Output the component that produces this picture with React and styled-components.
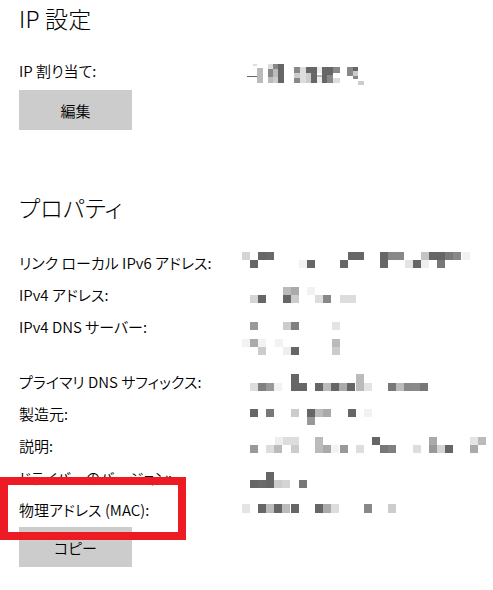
import styled, { createGlobalStyle } from "styled-components";

const GlobalStyle = createGlobalStyle`
  body {
    margin: 0;
    background: #fff;
    color: #000;
    font-family: "Noto Sans CJK JP", "Noto Sans", sans-serif;
    font-feature-settings: "palt";
  }
`;

// redacted values: [x, y, colour, w, h] in page coordinates
const B = (x, y, c, w = 8, h = 8) => [x, y, c, w, h];

const ipAssign = [
  B(247, 76, "#666", 10, 1), B(253, 64, "#ddd", 4, 2), B(257, 68, "#bbb", 6, 15),
  B(268, 64, "#ddd", 5, 5), B(268, 69, "#888", 5, 8), B(268, 77, "#bbb", 5, 6),
  B(273, 64, "#888", 5, 5), B(278, 64, "#666", 6, 5), B(273, 69, "#bbb", 5, 8),
  B(278, 69, "#666", 6, 8), B(273, 77, "#ccc", 5, 6), B(278, 77, "#666", 6, 6),
  B(294, 67, "#888", 6, 6), B(294, 73, "#ccc", 6, 5), B(294, 78, "#888", 6, 5),
  B(300, 67, "#ddd", 6, 16), B(306, 67, "#666", 5, 6), B(306, 73, "#ccc", 5, 10),
  B(311, 67, "#666", 6, 16), B(317, 67, "#eee", 5, 6), B(317, 75, "#bbb", 5, 2),
  B(317, 77, "#eee", 5, 6), B(322, 67, "#666", 5, 16), B(327, 67, "#666", 6, 8),
  B(327, 75, "#888", 6, 8), B(333, 67, "#888", 7, 6), B(333, 78, "#ddd", 7, 5),
  B(347, 67, "#888", 6, 9), B(353, 67, "#666", 5, 4), B(353, 71, "#ccc", 5, 5),
  B(353, 76, "#888", 5, 3), B(358, 81, "#ccc", 6, 4),
];

const row = (y, list, h = 8) => list.map(([x, c]) => B(x, y, c, 8, h));

const linkLocal = [
  ...row(251, [[242, "#d4d4d4"], [258, "#666"], [266, "#6a6a6a"], [348, "#666"], [356, "#666"], [380, "#666"], [388, "#888"], [396, "#888"], [421, "#c4c4c4"], [429, "#666"], [437, "#666"], [445, "#7a7a7a"], [453, "#888"], [462, "#f2f2f2"]]),
  ...row(259, [[250, "#666"], [299, "#f2f2f2"], [307, "#666"], [340, "#666"], [380, "#666"], [405, "#e4e4e4"], [413, "#666"], [421, "#eee"], [437, "#777"]]),
];

const ipv4 = [
  ...row(286, [[283, "#bbb"], [291, "#aaa"], [307, "#f2f2f2"]]),
  ...row(294, [[250, "#d4d4d4"], [258, "#666"], [283, "#666"], [291, "#ccc"], [315, "#ddd"], [323, "#888"], [340, "#ddd"], [348, "#ddd"]]),
];

const dns = [
  ...row(321, [[250, "#999"], [283, "#ccc"], [291, "#808080"], [332, "#e4e4e4"]]),
  ...row(338, [[242, "#f2f2f2"], [250, "#aaa"], [258, "#f2f2f2"], [275, "#f2f2f2"], [332, "#bbb"]]),
  ...row(346, [[258, "#ccc"], [283, "#eee"], [291, "#666"], [332, "#ccc"]]),
];

const suffix = [
  ...row(373, [[291, "#666"], [356, "#bbb"]], 9),
  ...row(382, [[250, "#ddd"], [258, "#808080"], [266, "#999"], [274, "#f2f2f2"], [291, "#666"], [299, "#666"], [315, "#666"], [323, "#bbb"], [331, "#666"], [339, "#aaa"], [347, "#666"], [356, "#bbb"], [364, "#e4e4e4"], [388, "#777"], [396, "#bbb"], [404, "#888"], [412, "#8a8a8a"], [420, "#777"]]),
];

const maker = [
  ...row(408, [[250, "#666"], [266, "#777"], [291, "#ccc"], [307, "#666"], [315, "#bbb"], [323, "#aaa"], [348, "#666"], [364, "#f2f2f2"]]),
  ...row(416, [[307, "#999"]]),
];

const desc = [
  ...row(434, [[275, "#eee"], [283, "#ddd"], [291, "#ddd"], [315, "#bbb"], [372, "#666"], [429, "#aaa"], [470, "#e4e4e4"], [478, "#bbb"]]),
  ...row(442, [[250, "#999"], [266, "#ddd"], [274, "#bbb"], [291, "#ccc"], [315, "#bbb"], [323, "#aaa"], [331, "#f2f2f2"], [340, "#999"], [356, "#ddd"], [380, "#777"], [388, "#808080"], [413, "#ddd"], [429, "#999"], [437, "#d4d4d4"], [445, "#666"], [470, "#aaa"]]),
];

const driver = [
  ...row(469, [[266, "#666"]]),
  ...row(477, [[250, "#666"], [258, "#6a6a6a"], [266, "#666"], [274, "#ccc"], [282, "#d4d4d4"], [299, "#777"]]),
];

const mac = [
  ...row(504, [[242, "#e4e4e4"], [258, "#666"], [266, "#bbb"], [274, "#666"], [282, "#bbb"], [291, "#666"], [315, "#666"], [323, "#aaa"], [331, "#ddd"], [364, "#888"], [388, "#ccc"]], 9),
];

const Mosaic = ({ blocks, top, height = 20 }) => (
  <MosaicSvg width="250" height={height}>
    {blocks.map(([x, y, c, w, h], i) => (
      <rect key={i} x={x - 242} y={y - top} width={w} height={h} fill={c} />
    ))}
  </MosaicSvg>
);

const props = [
  { label: "リンク ローカル IPv6 アドレス:", blocks: linkLocal, top: 252 },
  { label: "IPv4 アドレス:", blocks: ipv4, top: 284 },
  { label: "IPv4 DNS サーバー:", blocks: dns, top: 316, tall: true },
  { label: "プライマリ DNS サフィックス:", blocks: suffix, top: 371 },
  { label: "製造元:", blocks: maker, top: 403 },
  { label: "説明:", blocks: desc, top: 433 },
  { label: "ドライバーのバージョン:", blocks: driver, top: 465 },
];

const App = () => {
  return (
    <Page>
      <GlobalStyle />
      <Title>IP 設定</Title>
      <Row $gap={0}>
        <Label>IP 割り当て:</Label>
        <Mosaic blocks={ipAssign} top={61} />
      </Row>
      <Button>編集</Button>

      <Section>
        <Title>プロパティ</Title>
        <List>
          {props.map((p) => (
            <Row key={p.label} $tall={p.tall}>
              <Label>{p.label}</Label>
              <Mosaic blocks={p.blocks} top={p.top} height={p.tall ? 40 : 20} />
            </Row>
          ))}
          <Highlighted>
            <Row>
              <Label>物理アドレス (MAC):</Label>
              <Mosaic blocks={mac} top={500} />
            </Row>
            <Button $top={7}>コピー</Button>
            <RedBox />
          </Highlighted>
        </List>
      </Section>
    </Page>
  );
};

const Page = styled.div`
  width: 493px;
  height: 590px;
  padding-left: 19px;
  box-sizing: border-box;
  overflow: hidden;
`;

const Title = styled.div`
  font-size: 23px;
  line-height: 36px;
  font-weight: 300;
  letter-spacing: 0.2px;
`;

const Section = styled.div`
  margin-top: 59px;
`;

const List = styled.div`
  display: flex;
  flex-direction: column;
  gap: 12px;
  margin-top: 28px;
`;

const Row = styled.div`
  display: grid;
  grid-template-columns: 223px 1fr;
  align-items: start;
  height: ${(p) => (p.$tall ? "43px" : "20px")};
  margin-top: ${(p) => (p.$gap === 0 ? "25px" : "0")};
`;

const Label = styled.div`
  font-size: 15px;
  line-height: 20px;
  font-weight: 350;
  white-space: nowrap;
`;

const MosaicSvg = styled.svg`
  display: block;
  overflow: visible;
`;

const Button = styled.div`
  width: 113px;
  height: 40px;
  margin-top: ${(p) => (p.$top ?? 9) + "px"};
  background: #cccccc;
  display: flex;
  align-items: center;
  justify-content: center;
  font-size: 15px;
  font-weight: 350;
`;

const Highlighted = styled.div`
  position: relative;
`;

const RedBox = styled.div`
  position: absolute;
  left: -19px;
  top: -23px;
  width: 186px;
  height: 63px;
  box-sizing: border-box;
  border: 8px solid #ed1c24;
  pointer-events: none;
`;

export default App;
